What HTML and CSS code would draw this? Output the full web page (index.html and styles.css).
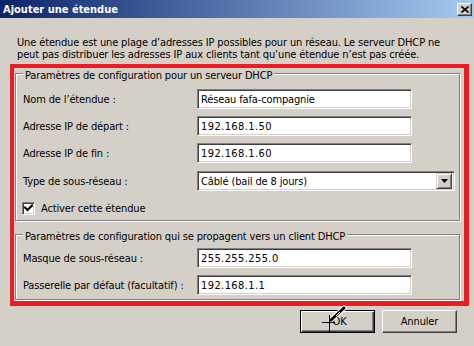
FILE: index.html
```html
<!DOCTYPE html>
<html lang="fr">
<head>
<meta charset="utf-8">
<title>Ajouter une étendue</title>
<link rel="stylesheet" href="styles.css">
</head>
<body>
<div class="window">
  <div class="titlebar">
    <span class="title">Ajouter une étendue</span>
    <span class="close"><svg width="8" height="7" viewBox="0 0 8 7"><path d="M0.5 0.5 L7.5 6.5 M7.5 0.5 L0.5 6.5" stroke="#000" stroke-width="1.6" fill="none"/></svg></span>
  </div>
  <p class="intro">Une étendue est une plage d’adresses IP possibles pour un réseau. Le serveur DHCP ne<br>peut pas distribuer les adresses IP aux clients tant qu’une étendue n’est pas créée.</p>
  <div class="highlight">
    <div class="group g1">
      <div class="legend">Paramètres de configuration pour un serveur DHCP</div>
      <div class="row first"><span class="label">Nom de l’étendue :</span><span class="field">Réseau fafa-compagnie</span></div>
      <div class="row"><span class="label">Adresse IP de départ :</span><span class="field ip">192.168.1.50</span></div>
      <div class="row"><span class="label">Adresse IP de fin :</span><span class="field ip">192.168.1.60</span></div>
      <div class="row sel"><span class="label">Type de sous-réseau :</span><span class="select"><span class="value">Câblé (bail de 8 jours)</span><span class="drop"><svg width="7" height="4" viewBox="0 0 7 4"><path d="M0 0 H7 L3.5 4 Z" fill="#000"/></svg></span></span></div>
      <div class="check-row"><span class="checkbox"><svg width="9" height="9" viewBox="0 0 9 9"><path d="M1 3.5 L3.5 6 L8 1.5" stroke="#000" stroke-width="2" fill="none" stroke-linecap="square"/></svg></span><span>Activer cette étendue</span></div>
    </div>
    <div class="group g2">
      <div class="legend">Paramètres de configuration qui se propagent vers un client DHCP</div>
      <div class="row first"><span class="label">Masque de sous-réseau :</span><span class="field ip">255.255.255.0</span></div>
      <div class="row"><span class="label">Passerelle par défaut (facultatif) :</span><span class="field ip">192.168.1.1</span></div>
    </div>
  </div>
  <div class="buttons">
    <span class="btn default">OK</span>
    <span class="btn">Annuler</span>
  </div>
  <svg class="cursor" width="26" height="30" viewBox="0 0 26 30">
    <path d="M9 15 L22 3" stroke="#fff" stroke-width="5" stroke-linecap="round"/>
    <path d="M9 15 L22 3" stroke="#000" stroke-width="3" stroke-linecap="round"/>
    <path d="M14 11 L18 7" stroke="#fff" stroke-width="1"/>
    <path d="M7.5 10 V27 M0 17.5 H13" stroke="#000" stroke-width="1"/>
  </svg>
</div>
</body>
</html>
```

FILE: styles.css
```css
* { box-sizing: border-box; }
html, body { margin: 0; padding: 0; }
body {
  width: 474px;
  height: 346px;
  overflow: hidden;
  background: #d4d0c8;
  font-family: "DejaVu Sans Condensed", "DejaVu Sans", sans-serif;
  font-size: 11px;
  letter-spacing: -0.14px;
  color: #000;
}
.window { position: relative; width: 474px; height: 346px; }
.titlebar {
  height: 18px;
  display: flex;
  align-items: center;
  justify-content: space-between;
  padding: 0 2px 0 3px;
  background: linear-gradient(to right, #0a246a 0%, #a6caf0 100%);
}
.title { color: #fff; font-weight: bold; font-size: 11px; letter-spacing: 0; }
.close {
  width: 15px; height: 13px;
  display: flex; align-items: center; justify-content: center;
  background: #d4d0c8;
  border: 1px solid; border-color: #fff #404040 #404040 #fff;
  box-shadow: inset -1px -1px 0 #808080;
}
.intro { margin: 19px 0 0 17px; line-height: 12px; }
.highlight {
  margin: 3px 0 0 10px;
  width: 459px;
  border-style: solid;
  border-color: #ed1c24;
  border-width: 4px 5px 5px 4px;
  padding: 0 0 1px 1px;
}
.group {
  width: 445px;
  border: 1px solid #808080;
  box-shadow: inset 1px 1px 0 #fff, 1px 1px 0 #fff;
  padding: 0 0 0 7px;
}
.g1 { margin-top: 5px; padding-bottom: 5px; }
.g2 { margin-top: 13px; padding-bottom: 4px; }
.legend {
  width: fit-content;
  margin: -5px 0 0 0;
  padding: 0 2px;
  line-height: 13px;
  background: #d4d0c8;
}
.row { display: flex; align-items: center; height: 20px; margin-top: 7px; }
.g2 .row.first { margin-top: 5px; }
.row.sel { margin-top: 8px; }
.label { width: 174px; }
.field, .select {
  height: 20px;
  background: #fff;
  border: 1px solid; border-color: #808080 #fff #fff #808080;
  box-shadow: inset 1px 1px 0 #404040, inset -1px -1px 0 #d4d0c8;
  display: flex; align-items: center;
  padding-left: 3px;
}
.field { width: 215px; }
.ip { letter-spacing: 0.4px; }
.select { width: 258px; justify-content: space-between; padding-right: 2px; }
.drop {
  width: 16px; height: 16px;
  display: flex; align-items: center; justify-content: center;
  background: #d4d0c8;
  border: 1px solid; border-color: #d4d0c8 #404040 #404040 #d4d0c8;
  box-shadow: inset 1px 1px 0 #fff, inset -1px -1px 0 #808080;
}
.check-row { display: flex; align-items: center; height: 13px; margin: 11px 0 0 -1px; gap: 6px; }
.checkbox {
  width: 13px; height: 13px;
  background: #fff;
  border: 1px solid; border-color: #808080 #fff #fff #808080;
  box-shadow: inset 1px 1px 0 #404040, inset -1px -1px 0 #d4d0c8;
  display: flex; align-items: center; justify-content: center;
}
.buttons { display: flex; justify-content: flex-end; gap: 7px; margin-top: 4px; padding-right: 17px; }
.btn {
  width: 75px; height: 23px;
  display: flex; align-items: center; justify-content: center;
  border: 1px solid; border-color: #fff #404040 #404040 #fff;
  box-shadow: inset -1px -1px 0 #808080;
}
.btn.default {
  border: 1px solid #000;
  box-shadow: inset 1px 1px 0 #fff, inset -1px -1px 0 #404040, inset -2px -2px 0 #808080;
  padding-left: 4px;
}
.cursor { position: absolute; left: 322px; top: 305px; }
```
